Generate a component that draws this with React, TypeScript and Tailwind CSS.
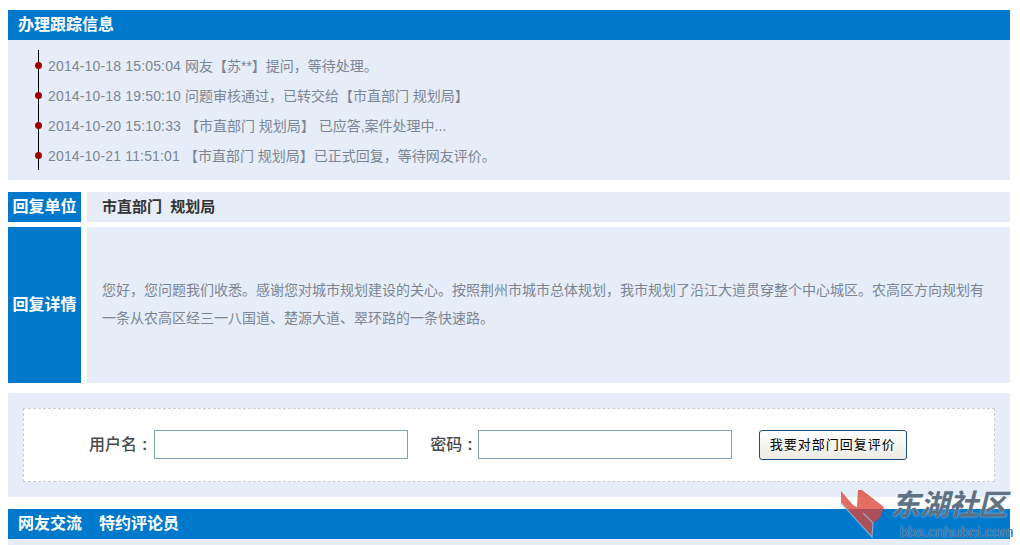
const font = "font-['Liberation_Sans','Noto_Sans_CJK_SC',sans-serif]";

const steps = [
  ["2014-10-18 15:05:04", " 网友【苏**】提问，等待处理。"],
  ["2014-10-18 19:50:10", " 问题审核通过，已转交给【市直部门 规划局】"],
  ["2014-10-20 15:10:33", " 【市直部门 规划局】 已应答,案件处理中..."],
  ["2014-10-21 11:51:01", " 【市直部门 规划局】已正式回复，等待网友评价。"],
];

function Watermark() {
  return (
    <div className="absolute left-[839px] top-[490px] h-[50px] w-[175px]">
      <svg width="50" height="50" viewBox="0 0 50 50" className="absolute left-0 top-0">
        <path d="M2 1 L14 15 L18 17 L19 0 L23 0 L45 17 L41 28 L34 33 L33 47 L2 13 Z" fill="#dc4438" fillOpacity="0.78" />
        <path d="M2 13 L33 47 L34 33 L24 23" fill="none" stroke="#8fc1e6" strokeOpacity="0.75" strokeWidth="1.2" />
      </svg>
      <span className="absolute left-[52px] top-[-3px] text-[29px] leading-[36px] font-bold italic whitespace-nowrap text-[#4f6274]/90 [text-shadow:0_0_2px_#cfe0f0]">
        东湖社区
      </span>
      <span className="absolute left-[61px] top-[33px] font-['Liberation_Sans',sans-serif] text-[15px] leading-[17px] whitespace-nowrap text-[#2f6390] [text-shadow:0_0_1px_#cfe6f6]">
        bbs.cnhubei.com
      </span>
    </div>
  );
}

export default function App() {
  return (
    <div className={`relative h-[545px] w-[1020px] overflow-hidden bg-white px-2 pt-[10px] ${font}`}>
      <div className="w-[1002px]">
        <div className="flex h-[30px] items-center bg-[#0079cc] pl-[10px] text-[16px] font-bold text-white">
          办理跟踪信息
        </div>
        <div className="h-[140px] bg-[#e6edf8] pl-[30px] pt-[10px]">
          <ul className="h-[120px] border-l border-black">
            {steps.map(([time, text]) => (
              <li key={time} className="relative flex h-[30px] items-center pl-[9px] pt-[3px] text-[14px] whitespace-pre text-[#7c8594]">
                <span className="absolute left-[-4px] top-[12px] h-[7px] w-[7px] rounded-full bg-[#a00000]" />
                <span className="tracking-[0.16px]">{time}</span>
                {text}
              </li>
            ))}
          </ul>
        </div>

        <div className="mt-3 flex h-[30px] gap-[6px]">
          <div className="flex w-[73px] items-center justify-center bg-[#0079cc] text-[16px] font-bold text-white">
            回复单位
          </div>
          <div className="flex flex-1 items-center bg-[#e6edf8] pl-[15px] text-[15px] font-bold whitespace-pre text-[#333333]">
            市直部门  规划局
          </div>
        </div>
        <div className="mt-[5px] flex h-[156px] gap-[6px]">
          <div className="flex w-[73px] items-center justify-center bg-[#0079cc] text-[16px] font-bold text-white">
            回复详情
          </div>
          <div className="flex flex-1 items-center bg-[#e6edf8] px-[15px] pb-[2px] text-[14px] leading-[28px] text-[#7c8594]">
            <p>
              您好，您问题我们收悉。感谢您对城市规划建设的关心。按照荆州市城市总体规划，我市规划了沿江大道贯穿整个中心城区。农高区方向规划有一条从农高区经三一八国道、楚源大道、翠环路的一条快速路。
            </p>
          </div>
        </div>

        <div className="mt-[10px] h-[104px] bg-[#e6edf8] px-[15px] py-[15px]">
          <div className="flex h-[74px] items-center border border-dashed border-[#cccccc] bg-white pb-[1px] pl-[65px] text-[16px] font-medium text-[#4a4a4a]">
            <label className="flex items-center">
              用户名
              <span className="ml-[5px] font-bold">:</span>
              <input className="ml-[7px] h-[29px] w-[254px] border border-[#84a1bb] bg-white" />
            </label>
            <label className="ml-[22px] flex items-center">
              密码
              <span className="ml-[5px] font-bold">:</span>
              <input className="ml-[5px] h-[29px] w-[254px] border border-[#84a1bb] bg-white" />
            </label>
            <button className="ml-[27px] h-[30px] w-[148px] rounded-[3px] border border-[#1c4f80] bg-gradient-to-b from-white to-[#ecebe3] text-[13px] font-normal tracking-[1px] text-black">
              我要对部门回复评价
            </button>
          </div>
        </div>

        <div className="mt-3 flex h-[30px] items-center gap-[17px] bg-[#0079cc] pl-[10px] text-[16px] font-bold text-white">
          <span>网友交流</span>
          <span>特约评论员</span>
        </div>
        <div className="h-[6px] bg-[#e6edf8]" />
      </div>
      <Watermark />
    </div>
  );
}
